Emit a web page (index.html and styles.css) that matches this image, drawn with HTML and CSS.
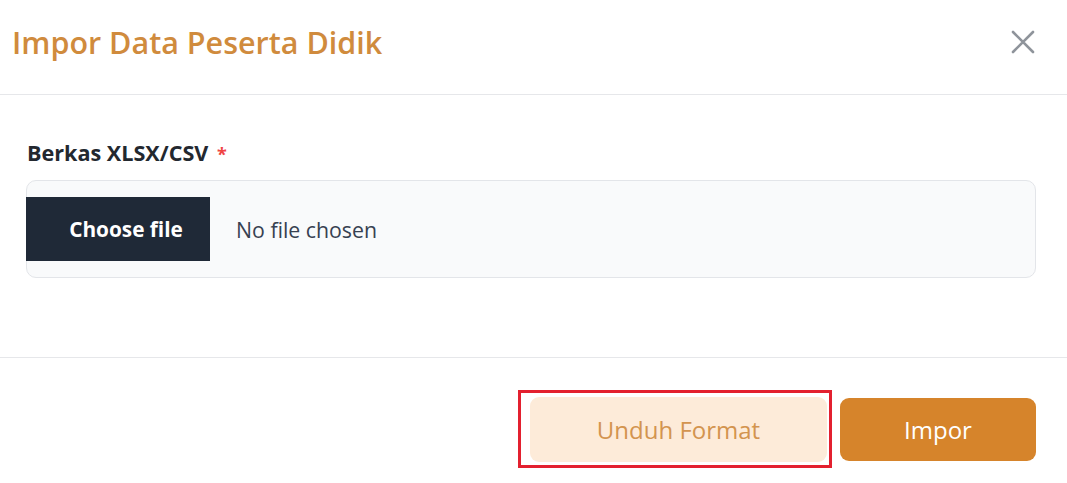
FILE: index.html
```html
<!DOCTYPE html>
<html lang="id">
<head>
<meta charset="utf-8">
<title>Impor Data Peserta Didik</title>
<link rel="stylesheet" href="styles.css">
</head>
<body>
<div class="modal">
  <header class="modal-header">
    <h1 class="modal-title">Impor Data Peserta Didik</h1>
    <button class="close-btn" aria-label="Tutup">
      <svg width="24" height="24" viewBox="0 0 24 24"><path d="M2 2 L22 22 M22 2 L2 22" stroke="#8f949b" stroke-width="2.6" stroke-linecap="round" fill="none"/></svg>
    </button>
  </header>
  <section class="modal-body">
    <label class="field-label">Berkas XLSX/CSV <span class="req">*</span></label>
    <div class="file-box">
      <span class="file-btn">Choose file</span>
      <span class="file-name">No file chosen</span>
    </div>
  </section>
  <footer class="modal-footer">
    <span class="highlight">
      <button class="btn btn-soft">Unduh Format</button>
    </span>
    <button class="btn btn-primary">Impor</button>
  </footer>
</div>
</body>
</html>
```

FILE: styles.css
```css
html, body {
  margin: 0;
  padding: 0;
  background: #ffffff;
}
body {
  font-family: "Open Sans", "Noto Sans", sans-serif;
}
.modal {
  width: 1067px;
  height: 483px;
  overflow: hidden;
}
.modal-header {
  height: 95px;
  box-sizing: border-box;
  border-bottom: 1px solid #e6e7ea;
  display: flex;
  align-items: center;
  justify-content: space-between;
  padding: 0 32px 10px 12px;
}
.modal-title {
  margin: 0;
  font-size: 30.5px;
  font-weight: 600;
  color: #d08b3d;
  letter-spacing: 0;
}
.close-btn {
  background: none;
  border: none;
  padding: 0;
  width: 24px;
  height: 24px;
  cursor: pointer;
}
.modal-body {
  height: 263px;
  box-sizing: border-box;
  border-bottom: 1px solid #e6e7ea;
  padding: 44px 31px 0 26px;
}
.field-label {
  display: block;
  font-size: 21.6px;
  font-weight: 700;
  color: #23282f;
  line-height: 28px;
  margin-left: 1px;
}
.req {
  color: #ef4444;
  margin-left: 3px;
  font-size: 18px;
}
.file-box {
  margin-top: 12px;
  height: 98px;
  box-sizing: border-box;
  border: 1px solid #e3e5e9;
  border-radius: 10px;
  background: #f9fafb;
  display: flex;
  align-items: center;
}
.file-btn {
  margin-left: -1px;
  width: 184px;
  height: 64px;
  box-sizing: border-box;
  padding-left: 16px;
  background: #1f2937;
  color: #ffffff;
  font-size: 20.8px;
  font-weight: 700;
  display: flex;
  align-items: center;
  justify-content: center;
}
.file-name {
  margin-left: 26px;
  font-size: 21.3px;
  color: #374151;
}
.modal-footer {
  display: flex;
  justify-content: flex-end;
  align-items: center;
  padding: 32px 31px 0 0;
}
.highlight {
  display: inline-flex;
  border: 3px solid #e3202f;
  padding: 4px 2px 3px 9px;
  margin-right: 8px;
}
.btn {
  font-family: "Open Sans", "Noto Sans", sans-serif;
  border: none;
  border-radius: 9px;
  font-size: 24px;
  cursor: pointer;
}
.btn-soft {
  width: 297px;
  height: 65px;
  background: #fdebd9;
  color: #d3944f;
}
.btn-primary {
  width: 196px;
  height: 63px;
  background: #d6842b;
  color: #ffffff;
}
```
